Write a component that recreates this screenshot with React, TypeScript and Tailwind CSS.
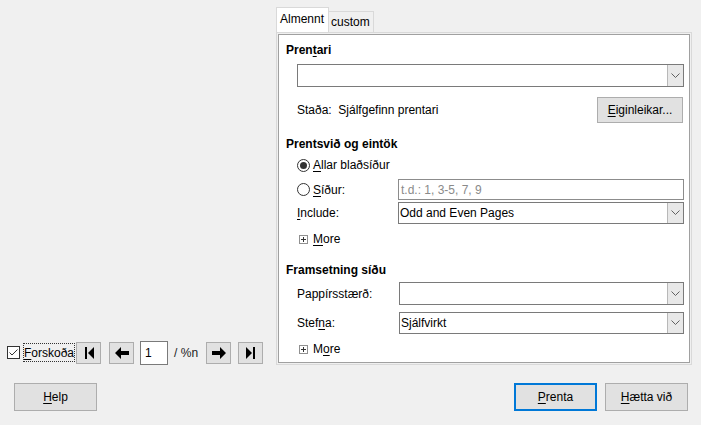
import React from "react";

const U = ({ children }: { children: React.ReactNode }) => (
  <span className="underline underline-offset-[2px]">{children}</span>
);

const Chevron = () => (
  <svg width="9" height="6" viewBox="0 0 9 6" fill="none">
    <path d="M0.5 0.5 L4.5 4.5 L8.5 0.5" stroke="#606060" strokeWidth="1" />
  </svg>
);

const Combo = ({ value, h }: { value?: string; h: string }) => (
  <div className={`flex-1 flex items-stretch border border-[#7a7a7a] bg-white ${h}`}>
    <div className="flex-1 pl-[1px] flex items-center text-black">{value}</div>
    <div className="w-[16px] bg-[#e8e8e8] border-l border-[#b8b8b8] flex items-center justify-center">
      <Chevron />
    </div>
  </div>
);

const Radio = ({ checked }: { checked?: boolean }) => (
  <div className="w-[13px] h-[13px] rounded-full border border-[#333] bg-white flex items-center justify-center">
    {checked && <div className="w-[7px] h-[7px] rounded-full bg-[#333]" />}
  </div>
);

const More = ({ children }: { children: React.ReactNode }) => (
  <div className="flex items-center h-[16px] ml-[20px]">
    <div className="w-[9px] h-[9px] border border-[#909090] relative mr-[5px]">
      <div className="absolute left-[1px] top-[3px] w-[5px] h-[1px] bg-[#333]" />
      <div className="absolute left-[3px] top-[1px] w-[1px] h-[5px] bg-[#333]" />
    </div>
    <span>{children}</span>
  </div>
);

const NavBtn = ({ children }: { children: React.ReactNode }) => (
  <div className="w-[25px] h-[22px] bg-[#e1e1e1] border border-[#adadad] flex items-center justify-center">
    {children}
  </div>
);

export default function App() {
  return (
    <div
      className="w-[701px] h-[425px] bg-[#f0f0f0] flex flex-col text-[12px] leading-[16px] text-black overflow-hidden"
      style={{ fontFamily: '"Liberation Sans", Arial, sans-serif' }}
    >
      <div className="flex h-[370px]">
        {/* left preview column */}
        <div className="w-[276px] flex flex-col justify-end pb-[6px] pl-[7px]">
          <div className="flex items-center h-[23px]">
            <div className="w-[13px] h-[13px] border border-[#333] bg-white flex items-center justify-center">
              <svg width="11" height="11" viewBox="0 0 11 11">
                <path d="M1.5 5.5 L4 8 L9.5 2.5" stroke="#333" strokeWidth="1" fill="none" />
              </svg>
            </div>
            <div className="ml-[3px] border border-dotted border-[#333] h-[19px] flex items-center">
              <U>F</U>orskoða
            </div>
            <div className="ml-[1px]">
              <NavBtn>
                <svg width="12" height="14" viewBox="0 0 12 14">
                  <rect x="2" y="1" width="2" height="12" fill="#000" />
                  <path d="M11 1 L5 7 L11 13 Z" fill="#000" />
                </svg>
              </NavBtn>
            </div>
            <div className="ml-[8px]">
              <NavBtn>
                <svg width="16" height="14" viewBox="0 0 16 14">
                  <path d="M1 7 L7 1 L7 5 L15 5 L15 9 L7 9 L7 13 Z" fill="#000" />
                </svg>
              </NavBtn>
            </div>
            <div className="ml-[6px] w-[28px] h-[24px] border border-[#7a7a7a] bg-white flex items-center pl-[4px]">
              1
            </div>
            <div className="ml-[6px] text-[#222]">/ %n</div>
            <div className="ml-[8px]">
              <NavBtn>
                <svg width="16" height="14" viewBox="0 0 16 14">
                  <path d="M15 7 L9 1 L9 5 L1 5 L1 9 L9 9 L9 13 Z" fill="#000" />
                </svg>
              </NavBtn>
            </div>
            <div className="ml-[7px]">
              <NavBtn>
                <svg width="12" height="14" viewBox="0 0 12 14">
                  <path d="M1 1 L7 7 L1 13 Z" fill="#000" />
                  <rect x="8" y="1" width="2" height="12" fill="#000" />
                </svg>
              </NavBtn>
            </div>
          </div>
        </div>

        {/* notebook */}
        <div className="pt-[7px] flex flex-col">
          <div className="flex items-end h-[25px]">
            <div className="h-[25px] w-[53px] bg-white border border-b-0 border-[#d9d9d9] pl-[3px] pt-[3px]">
              Almennt
            </div>
            <div className="h-[21px] w-[45px] bg-[#f0f0f0] border border-l-0 border-b-0 border-[#d9d9d9] pl-[2px] pt-[2px]">
              custom
            </div>
          </div>
          <div className="w-[416px] h-[333px] border border-[#d9d9d9] p-[1px]">
            <div className="w-full h-full border border-[#a0a0a0] bg-white flex flex-col">
              <div className="mt-[7px] ml-[7px] h-[16px] font-bold">
                Pren<U>t</U>ari
              </div>
              <div className="mt-[6px] ml-[18px] mr-[5px] flex">
                <Combo h="h-[23px]" />
              </div>
              <div className="mt-[10px] ml-[18px] mr-[6px] h-[26px] flex items-center justify-between">
                <span>Staða:&nbsp;&nbsp;Sjálfgefinn prentari</span>
                <div className="w-[86px] h-[26px] bg-[#e1e1e1] border border-[#adadad] flex items-center justify-center">
                  <span>
                    <U>E</U>iginleikar...
                  </span>
                </div>
              </div>
              <div className="mt-[13px] ml-[7px] h-[16px] font-bold">Prentsvið og eintök</div>
              <div className="mt-[3px] ml-[18px] h-[20px] flex items-center">
                <Radio checked />
                <span className="ml-[3px]">
                  <U>A</U>llar blaðsíður
                </span>
              </div>
              <div className="mt-[4px] ml-[18px] mr-[5px] h-[21px] flex items-center">
                <div className="w-[101px] flex items-center">
                  <Radio />
                  <span className="ml-[3px]">
                    <U>S</U>íður:
                  </span>
                </div>
                <div className="flex-1 h-[21px] border border-[#8c8c8c] bg-white flex items-center pl-[2px] text-[#8a8a8a]">
                  t.d.: 1, 3-5, 7, 9
                </div>
              </div>
              <div className="mt-[2px] ml-[18px] mr-[5px] h-[22px] flex items-center">
                <div className="w-[101px]">
                  <U>I</U>nclude:
                </div>
                <Combo h="h-[22px]" value="Odd and Even Pages" />
              </div>
              <div className="mt-[7px]">
                <More>
                  <U>M</U>ore
                </More>
              </div>
              <div className="mt-[15px] ml-[7px] h-[16px] font-bold">Framsetning síðu</div>
              <div className="mt-[4px] ml-[18px] mr-[5px] h-[23px] flex items-center">
                <div className="w-[102px]">Pappírsstærð:</div>
                <Combo h="h-[23px]" />
              </div>
              <div className="mt-[7px] ml-[18px] mr-[5px] h-[22px] flex items-center">
                <div className="w-[102px]">
                  Stef<U>n</U>a:
                </div>
                <Combo h="h-[22px]" value="Sjálfvirkt" />
              </div>
              <div className="mt-[7px]">
                <More>
                  M<U>o</U>re
                </More>
              </div>
            </div>
          </div>
        </div>
      </div>

      {/* bottom buttons */}
      <div className="mt-[13px] px-[14px] pr-[13px] flex justify-between">
        <div className="w-[83px] h-[28px] bg-[#e1e1e1] border border-[#adadad] flex items-center justify-center">
          <span>
            <U>H</U>elp
          </span>
        </div>
        <div className="flex gap-[8px]">
          <div className="w-[83px] h-[28px] bg-[#e1e1e1] border-2 border-[#0078d7] flex items-center justify-center">
            <span>
              <U>P</U>renta
            </span>
          </div>
          <div className="w-[83px] h-[28px] bg-[#e1e1e1] border border-[#adadad] flex items-center justify-center">
            <span>
              <U>H</U>ætta við
            </span>
          </div>
        </div>
      </div>
    </div>
  );
}
